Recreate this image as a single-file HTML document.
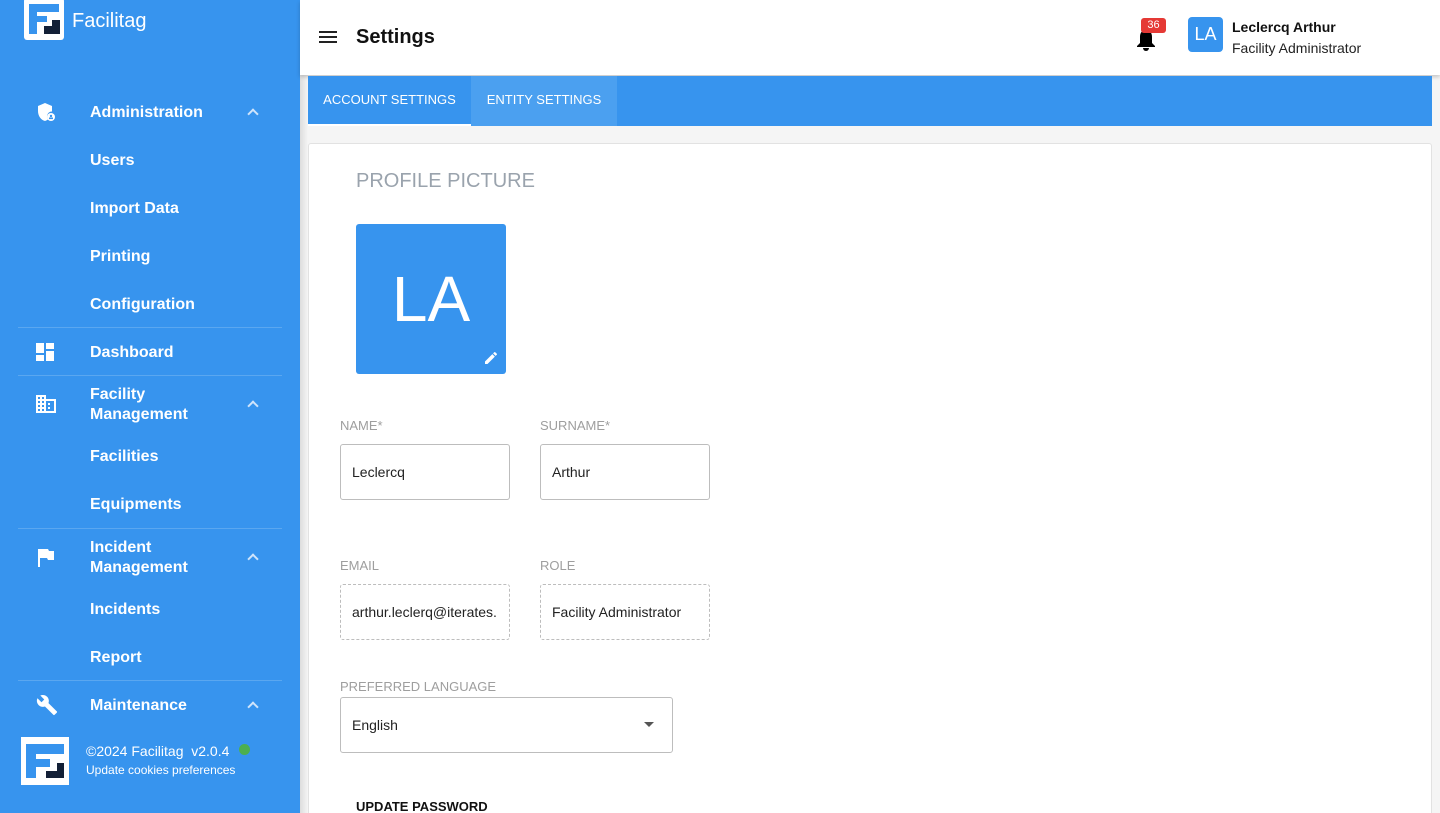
<!DOCTYPE html>
<html><head><meta charset="utf-8"><style>
*{box-sizing:border-box;margin:0;padding:0}
html,body{width:1440px;height:813px;overflow:hidden}
body{font-family:"Liberation Sans",Roboto,sans-serif;background:#f5f5f5;position:relative}
.sb{position:absolute;left:0;top:0;width:300px;height:813px;background:#3794ee;color:#fff}
.logo{position:absolute;left:24px;top:-2px;width:40px;height:42px;background:#fff;border-radius:3px}
.brand{position:absolute;left:72px;top:10px;font-size:20px}
.it{position:absolute;left:90px;font-size:16px;font-weight:bold;line-height:20px}
.ic{position:absolute;left:36px}
.chev{position:absolute;left:249px;width:8px;height:8px;border-left:2px solid #cfe4fb;border-top:2px solid #cfe4fb;transform:rotate(45deg)}
.sep{position:absolute;left:18px;width:264px;height:1px;background:#5aa7f0}
.top{position:absolute;left:300px;top:0;width:1140px;height:75px;background:#fff;box-shadow:0 2px 4px rgba(0,0,0,.2)}
.tabs{position:absolute;left:308px;top:76px;width:1124px;height:50px;background:#3794ee}
.tab{position:absolute;top:0;height:50px;line-height:48px;color:#fff;font-size:13px;text-align:center}
.card{position:absolute;left:308px;top:143px;width:1124px;height:680px;background:#fff;border:1px solid #e2e2e2;border-radius:3px}
.lbl{position:absolute;font-size:13px;color:#9e9e9e}
.inp{position:absolute;width:170px;height:56px;border:1px solid #bdbdbd;border-radius:3px;font-size:14px;padding-left:11px;line-height:54px;color:#222;overflow:hidden;white-space:nowrap}
.dash{border:1px dashed #bdbdbd}
</style></head><body>
<div class="sb">
<div class="logo"><svg width="40" height="42" viewBox="0 0 40 42"><rect x="5" y="6" width="30" height="8" fill="#3794ee"/><rect x="5" y="14" width="8" height="22" fill="#3794ee"/><rect x="13" y="18" width="10" height="6" fill="#3794ee"/><rect x="28" y="22" width="8" height="6" fill="#132036"/><rect x="20" y="28" width="16" height="8" fill="#132036"/></svg></div>
<div class="brand">Facilitag</div>
<svg class="ic" style="top:102px" width="20" height="20" viewBox="0 0 20 20"><path d="M9 1L2 4v5c0 5 3 9 7 10 1-.3 2-.8 3-1.5A5 5 0 0 1 16 9.5V4z" fill="#fff"/><circle cx="15" cy="15" r="4" fill="#fff"/><circle cx="15" cy="14" r="1.2" fill="#3794ee"/><rect x="13" y="15.5" width="4" height="1.6" fill="#3794ee"/></svg>
<div class="it" style="top:103px">Administration</div><div class="chev" style="top:110px"></div>
<div class="it" style="top:151px">Users</div>
<div class="it" style="top:199px">Import Data</div>
<div class="it" style="top:247px">Printing</div>
<div class="it" style="top:295px">Configuration</div>
<div class="sep" style="top:327px"></div>
<svg class="ic" style="top:343px" width="18" height="18" viewBox="0 0 18 18" fill="#fff"><rect x="0" y="0" width="8" height="10"/><rect x="10" y="0" width="8" height="6"/><rect x="10" y="8" width="8" height="10"/><rect x="0" y="12" width="8" height="6"/></svg>
<div class="it" style="top:343px">Dashboard</div>
<div class="sep" style="top:375px"></div>
<svg class="ic" style="top:395px" width="20" height="18" viewBox="0 0 20 18" fill="#fff"><path d="M0 0h10v4h10v14H0z"/><g fill="#3794ee"><rect x="2" y="2" width="2" height="2"/><rect x="6" y="2" width="2" height="2"/><rect x="2" y="6" width="2" height="2"/><rect x="6" y="6" width="2" height="2"/><rect x="2" y="10" width="2" height="2"/><rect x="6" y="10" width="2" height="2"/><rect x="2" y="14" width="2" height="2"/><rect x="6" y="14" width="2" height="2"/><rect x="10" y="6" width="8" height="10"/></g><rect x="12" y="8" width="2" height="2"/><rect x="12" y="12" width="2" height="2"/></svg>
<div class="it" style="top:385px">Facility<br>Management</div><div class="chev" style="top:402px"></div>
<div class="it" style="top:447px">Facilities</div>
<div class="it" style="top:495px">Equipments</div>
<div class="sep" style="top:528px"></div>
<svg class="ic" style="top:549px;left:38px" width="16" height="18" viewBox="0 0 16 18" fill="#fff"><path d="M0 0h2v18H0zM2 0h8l1 2h5v9h-6l-1-2H2z"/></svg>
<div class="it" style="top:538px">Incident<br>Management</div><div class="chev" style="top:555px"></div>
<div class="it" style="top:600px">Incidents</div>
<div class="it" style="top:648px">Report</div>
<div class="sep" style="top:680px"></div>
<svg class="ic" style="top:694px" width="22" height="22" viewBox="0 0 24 24" fill="#fff"><path d="M22.7 19l-9.1-9.1c.9-2.3.4-5-1.5-6.9-2-2-5-2.4-7.4-1.3L9 6 6 9 1.6 4.7C.4 7.1.9 10.1 2.9 12.1c1.9 1.9 4.6 2.4 6.9 1.5l9.1 9.1c.4.4 1 .4 1.4 0l2.3-2.3c.5-.4.5-1.1.1-1.4z"/></svg>
<div class="it" style="top:696px">Maintenance</div><div class="chev" style="top:703px"></div>
<div style="position:absolute;left:21px;top:737px;width:48px;height:48px;background:#fff"><svg width="48" height="48" viewBox="0 0 48 48"><rect x="5" y="7" width="38" height="10" fill="#3794ee"/><rect x="5" y="17" width="10" height="24" fill="#3794ee"/><rect x="15" y="22" width="14" height="8" fill="#3794ee"/><rect x="36" y="26" width="7" height="8" fill="#132036"/><rect x="25" y="34" width="18" height="7" fill="#132036"/></svg></div>
<div style="position:absolute;left:86px;top:743px;font-size:14px">©2024 Facilitag&nbsp; v2.0.4</div>
<div style="position:absolute;left:239px;top:744px;width:11px;height:11px;border-radius:50%;background:#4caf50"></div>
<div style="position:absolute;left:86px;top:763px;font-size:12px">Update cookies preferences</div>
</div>
<div style="position:absolute;left:300px;top:75px;width:8px;height:738px;background:linear-gradient(90deg,#ddd,#f5f5f5)"></div>
<div class="top">
<div style="position:absolute;left:19px;top:31px;width:18px;height:2px;background:#222;box-shadow:0 5px 0 #222,0 10px 0 #222"></div>
<div style="position:absolute;left:56px;top:26px;font-size:20px;font-weight:bold;color:#111">Settings</div>
<svg style="position:absolute;left:835px;top:28px" width="22" height="24" viewBox="0 0 22 24"><path d="M11 2c-4 0-6 3-6 7v6l-3 3v1h18v-1l-3-3V9c0-4-2-7-6-7z" fill="#000"/><path d="M8 20h6a3 3 0 0 1-6 0z" fill="#000"/></svg>
<div style="position:absolute;left:841px;top:18px;width:25px;height:15px;background:#e53935;border-radius:3px;color:#fff;font-size:11px;text-align:center;line-height:15px">36</div>
<div style="position:absolute;left:888px;top:17px;width:35px;height:35px;background:#3794ee;border-radius:4px;color:#fff;font-size:18px;text-align:center;line-height:35px">LA</div>
<div style="position:absolute;left:932px;top:19px;font-size:14px;font-weight:bold;color:#111">Leclercq Arthur</div>
<div style="position:absolute;left:932px;top:40px;font-size:14px;color:#222">Facility Administrator</div>
</div>
<div class="tabs">
<div class="tab" style="left:0;width:163px;border-bottom:2px solid #fff">ACCOUNT SETTINGS</div>
<div class="tab" style="left:163px;width:146px;background:#4ba0f0">ENTITY SETTINGS</div>
</div>
<div class="card">
<div style="position:absolute;left:47px;top:26px;font-size:20px;color:#9aa3ad">PROFILE PICTURE</div>
<div style="position:absolute;left:47px;top:80px;width:150px;height:150px;background:#3794ee;border-radius:3px;color:#fff;font-size:64px;text-align:center;line-height:150px">LA</div>
<svg style="position:absolute;left:174px;top:206px" width="16" height="16" viewBox="0 0 24 24" fill="#fff"><path d="M3 17.25V21h3.75L17.8 9.94l-3.75-3.75zM20.7 7.04a1 1 0 0 0 0-1.41l-2.34-2.34a1 1 0 0 0-1.41 0l-1.83 1.83 3.75 3.75z"/></svg>
<div class="lbl" style="left:31px;top:274px">NAME*</div>
<div class="lbl" style="left:231px;top:274px">SURNAME*</div>
<div class="inp" style="left:31px;top:300px">Leclercq</div>
<div class="inp" style="left:231px;top:300px">Arthur</div>
<div class="lbl" style="left:31px;top:414px">EMAIL</div>
<div class="lbl" style="left:231px;top:414px">ROLE</div>
<div class="inp dash" style="left:31px;top:440px">arthur.leclerq@iterates.</div>
<div class="inp dash" style="left:231px;top:440px">Facility Administrator</div>
<div class="lbl" style="left:31px;top:535px">PREFERRED LANGUAGE</div>
<div class="inp" style="left:31px;top:553px;width:333px">English</div>
<div style="position:absolute;left:335px;top:578px;border-left:5px solid transparent;border-right:5px solid transparent;border-top:5px solid #555"></div>
<div style="position:absolute;left:47px;top:655px;font-size:13px;font-weight:bold;color:#111">UPDATE PASSWORD</div>
</div>
</body></html>
